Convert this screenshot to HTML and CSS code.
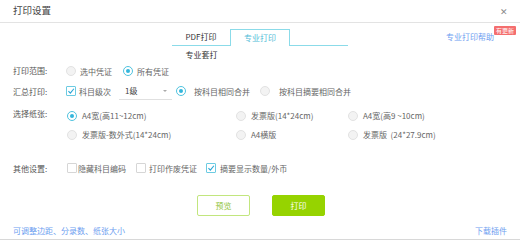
FILE: index.html
```html
<!DOCTYPE html>
<html lang="zh-CN">
<head>
<meta charset="utf-8">
<title>打印设置</title>
<link rel="stylesheet" href="styles.css">
</head>
<body>
<div class="dialog">
  <div class="header">
    <span class="title">打印设置</span>
    <span class="close">✕</span>
  </div>
  <div class="tabs-row">
    <div></div>
    <div class="tabs">
      <div class="tab">PDF打印</div>
      <div class="tab active">专业打印</div>
      <div class="tab"></div>
    </div>
    <div class="help-cell">
      <span class="help">专业打印帮助<span class="badge">有更新</span></span>
    </div>
  </div>
  <div class="subtabs">
    <div class="subtab">专业套打</div>
  </div>

  <div class="row r1">
    <div class="label">打印范围:</div>
    <div class="opts">
      <span class="opt"><span class="radio"></span>选中凭证</span>
      <span class="opt"><span class="radio on"></span>所有凭证</span>
    </div>
  </div>

  <div class="row r2">
    <div class="label">汇总打印:</div>
    <div class="opts">
      <span class="opt"><span class="check on"><svg viewBox="0 0 10 10" width="10" height="10"><path d="M1.8 5.2 L4.2 7.6 L8.6 2.2" fill="none" stroke="#2aa6d6" stroke-width="1.4"/></svg></span>科目级次</span>
      <span class="select">1级<span class="arrow"></span></span>
      <span class="opt o-merge"><span class="radio on"></span>按科目相同合并</span>
      <span class="opt o-merge2"><span class="radio"></span>按科目摘要相同合并</span>
    </div>
  </div>

  <div class="row r3">
    <div class="label">选择纸张:</div>
    <div class="paper">
      <span class="opt"><span class="radio on"></span>A4宽(高11~12cm)</span>
      <span class="opt"><span class="radio"></span>发票版(14*24cm)</span>
      <span class="opt"><span class="radio"></span>A4宽(高9 ~10cm)</span>
      <span class="opt"><span class="radio"></span>发票版-数外式(14*24cm)</span>
      <span class="opt"><span class="radio"></span>A4横版</span>
      <span class="opt"><span class="radio"></span>发票版&nbsp;&nbsp;(24*27.9cm)</span>
    </div>
  </div>

  <div class="row r4">
    <div class="label">其他设置:</div>
    <div class="opts">
      <span class="opt tight"><span class="check"></span>隐藏科目编码</span>
      <span class="opt o-void"><span class="check"></span>打印作废凭证</span>
      <span class="opt o-sum"><span class="check on"><svg viewBox="0 0 10 10" width="10" height="10"><path d="M1.8 5.2 L4.2 7.6 L8.6 2.2" fill="none" stroke="#2aa6d6" stroke-width="1.4"/></svg></span>摘要显示数量/外币</span>
    </div>
  </div>

  <div class="buttons">
    <button class="btn ghost">预览</button>
    <button class="btn primary">打印</button>
  </div>

  <div class="footer">
    <span class="link">可调整边距、分录数、纸张大小</span>
    <span class="link">下载插件</span>
  </div>
</div>
</body>
</html>
```

FILE: styles.css
```css
* { box-sizing: border-box; }
html, body { margin: 0; padding: 0; background: #fff; }
body {
  font-family: "Noto Sans CJK SC", "Noto Sans", "Liberation Sans", sans-serif;
  font-size: 8px;
  color: #555;
}
.dialog {
  width: 520px;
  height: 240px;
  border-bottom: 1px solid #d8d8d8;
}
.header {
  height: 23px;
  border-bottom: 1px solid #e3e3e3;
  display: flex;
  align-items: center;
  justify-content: space-between;
  padding: 0 12px 0 13px;
}
.title { font-size: 9.5px; color: #444; line-height: 12px; margin-top: -2px; }
.close { font-size: 8.5px; color: #8a8a8a; margin-top: -1px; }

.tabs-row {
  margin-top: 6px;
  display: grid;
  grid-template-columns: 1fr 176px 1fr;
  height: 17px;
}
.tabs { display: flex; }
.tab {
  flex: 1;
  height: 17px;
  border-bottom: 1px solid #8bdbe9;
  text-align: center;
  line-height: 16px;
  color: #333;
}
.tab.active {
  border: 1px solid #8bdbe9;
  border-bottom: none;
  color: #52bdd8;
}
.help-cell { display: flex; justify-content: flex-end; padding-right: 26px; }
.help {
  position: relative;
  color: #6e9ef0;
  line-height: 16px;
}
.badge {
  position: absolute;
  left: 48px;
  top: -3px;
  width: 22px;
  height: 9px;
  background: #f46e6e;
  color: #fff;
  font-size: 6px;
  line-height: 9px;
  text-align: center;
  border-radius: 1px;
}
.subtabs { display: flex; justify-content: center; padding-right: 117px; height: 15px; }
.subtab { width: 59px; text-align: center; line-height: 14px; padding-top: 2px; color: #333; }

.row { display: flex; padding-left: 13px; }
.label { width: 53px; flex: none; color: #555; }
.opts { display: flex; align-items: center; }
.opt { display: inline-flex; align-items: center; color: #666; white-space: nowrap; }
.radio {
  width: 10px; height: 10px;
  border-radius: 50%;
  border: 1px solid #e2e2e2;
  background: #f3f3f3;
  margin-right: 4px;
  position: relative;
  flex: none;
}
.radio.on { border-color: #4ec3df; background: #fff; }
.radio.on::after {
  content: "";
  position: absolute;
  left: 2px; top: 2px;
  width: 4px; height: 4px;
  border-radius: 50%;
  background: #34b6dc;
}
.check {
  width: 10px; height: 10px;
  border: 1px solid #d6d6d6;
  border-radius: 1px;
  margin-right: 3px;
  flex: none;
  display: inline-flex;
  align-items: center;
  justify-content: center;
  background: #fff;
}
.check.on { border-color: #6ccbe2; }
.check svg { display: block; }

.r1 { height: 20px; align-items: center; }
.r1 .label { line-height: 20px; }
.r1 .opt + .opt { margin-left: 11px; }

.r2 { height: 20px; align-items: center; }
.select {
  position: relative;
  width: 53px;
  height: 16px;
  margin-left: 8px;
  padding-left: 6px;
  line-height: 14px;
  color: #444;
  border-bottom: 1px solid #e0e0e0;
  margin-top: 2px;
}
.arrow {
  position: absolute;
  right: 5px; top: 6px;
  width: 0; height: 0;
  border-left: 2px solid transparent;
  border-right: 2px solid transparent;
  border-top: 2px solid #aaa;
}
.o-merge { margin-left: 4px; }
.o-merge .radio { margin-right: 8px; }
.o-merge2 { margin-left: 10px; }
.o-merge2 .radio { margin-right: 9px; }

.r3 { margin-top: 4px; }
.r3 .label { line-height: 16px; padding-top: 1px; }
.paper {
  display: grid;
  grid-template-columns: 169px 112px 1fr;
  grid-auto-rows: 19px;
  margin-left: 1px;
  margin-top: 1px;
}
.paper .radio { margin-right: 5px; }

.r4 { margin-top: 14px; height: 20px; align-items: center; }
.r4 .opts { margin-left: 1px; }
.tight .check { margin-right: 1px; }
.o-void { margin-left: 10px; }
.o-void .check { margin-right: 3px; }
.o-sum { margin-left: 9px; }
.o-sum .check { margin-right: 4px; }

.buttons {
  margin-top: 17px;
  display: flex;
  justify-content: center;
  gap: 22px;
  padding-left: 2px;
}
.btn {
  width: 53px;
  height: 21px;
  font-family: inherit;
  font-size: 8px;
  border-radius: 2px;
  padding: 0;
}
.ghost { background: #fff; border: 1px solid #c2e67e; color: #8fc43a; }
.primary { background: #96d300; border: 1px solid #96d300; color: #fff; }

.footer {
  margin-top: 8px;
  display: flex;
  justify-content: space-between;
  padding: 0 13px;
  height: 14px;
  line-height: 14px;
}
.link { color: #6e9ef0; }
```
